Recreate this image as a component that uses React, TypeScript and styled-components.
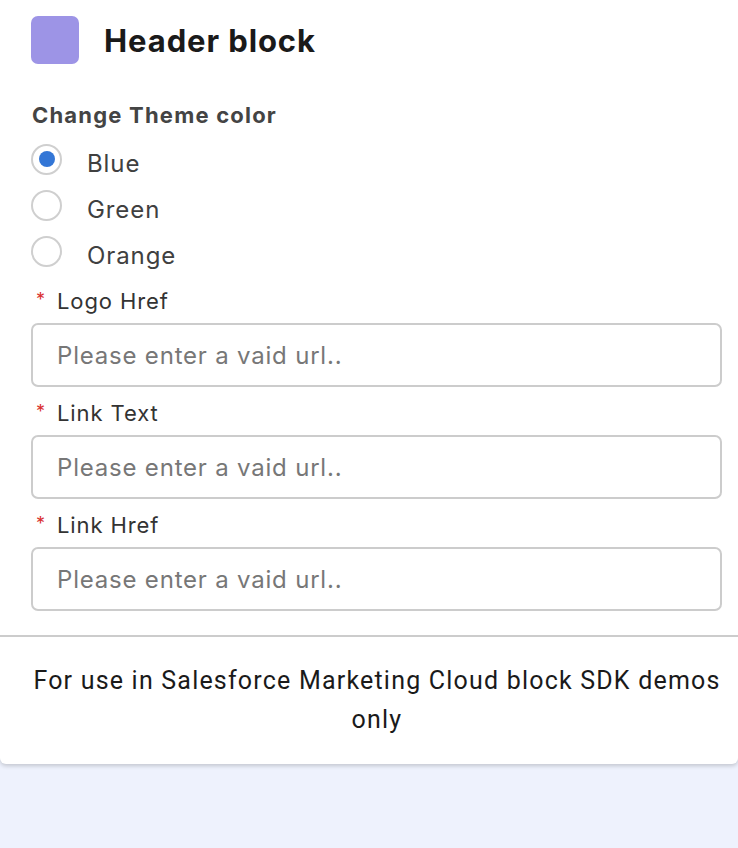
import styled, { createGlobalStyle } from "styled-components";
import { useState } from "react";

const GlobalStyle = createGlobalStyle`
  html, body {
    margin: 0;
    padding: 0;
    background: #eef2fd;
  }
  body {
    font-family: Inter, "Noto Sans", sans-serif;
    min-height: 848px;
  }
`;

const Card = styled.div`
  background: #ffffff;
  border-radius: 0 0 6px 6px;
  box-shadow: 0 2px 4px rgba(0, 0, 0, 0.18);
  width: 738px;
`;

const Body = styled.div`
  padding: 16px 16px 24px 31px;
`;

const TitleRow = styled.div`
  display: flex;
  align-items: center;
  gap: 25px;
  height: 48px;
`;

const Swatch = styled.div`
  width: 48px;
  height: 48px;
  border-radius: 7px;
  background: #9d94e6;
`;

const Title = styled.h1`
  margin: 0;
  font-size: 31px;
  font-weight: 700;
  letter-spacing: 0.9px;
  color: #1a1a1a;
`;

const GroupLabel = styled.div`
  margin-top: 38px;
  font-size: 22px;
  font-weight: 700;
  letter-spacing: 1.2px;
  color: #444444;
  line-height: 26px;
  padding-left: 1px;
`;

const RadioList = styled.div`
  display: flex;
  flex-direction: column;
  gap: 16px;
  margin-top: 16px;
`;

const RadioRow = styled.label`
  display: flex;
  align-items: center;
  gap: 25px;
  height: 30px;
  cursor: pointer;
`;

const RadioCircle = styled.span<{ $checked: boolean }>`
  box-sizing: border-box;
  width: 31px;
  height: 31px;
  border-radius: 50%;
  border: 2px solid #cfcfcf;
  background: #ffffff;
  display: flex;
  align-items: center;
  justify-content: center;

  &::after {
    content: "";
    width: 16px;
    height: 16px;
    border-radius: 50%;
    background: #3376d6;
    display: ${(p) => (p.$checked ? "block" : "none")};
  }
`;

const RadioText = styled.span`
  font-size: 24px;
  letter-spacing: 0.9px;
  color: #404040;
  margin-top: 8px;
`;

const Field = styled.div`
  margin-top: 22px;
  & + & {
    margin-top: 13px;
  }
`;

const FieldLabel = styled.div`
  display: flex;
  align-items: center;
  font-size: 22px;
  letter-spacing: 0.9px;
  color: #333333;
  line-height: 26px;
  padding-left: 5px;
  margin-bottom: 9px;
`;

const Required = styled.span`
  color: #d93030;
  font-size: 18px;
  width: 21px;
  margin-top: -3px;
`;

const Input = styled.input`
  box-sizing: border-box;
  display: block;
  width: 691px;
  height: 64px;
  border: 2px solid #cccccc;
  border-radius: 7px;
  padding: 0 24px;
  font-family: Inter, "Noto Sans", sans-serif;
  font-size: 24px;
  letter-spacing: 0.8px;
  color: #333333;
  outline: none;

  &::placeholder {
    color: #777777;
  }
`;

const Divider = styled.hr`
  margin: 0;
  border: none;
  border-top: 2px solid #cccccc;
`;

const Footer = styled.div`
  padding: 24px 0 25px 16px;
  text-align: center;
  font-family: Roboto, "Liberation Sans", sans-serif;
  font-size: 25px;
  letter-spacing: 1.2px;
  line-height: 39px;
  color: #1a1a1a;
`;

const themes = ["Blue", "Green", "Orange"];
const fields = ["Logo Href", "Link Text", "Link Href"];

export default function App() {
  const [theme, setTheme] = useState("Blue");

  return (
    <>
      <GlobalStyle />
      <Card>
        <Body>
          <TitleRow>
            <Swatch />
            <Title>Header block</Title>
          </TitleRow>
          <GroupLabel>Change Theme color</GroupLabel>
          <RadioList>
            {themes.map((t) => (
              <RadioRow key={t} onClick={() => setTheme(t)}>
                <RadioCircle $checked={theme === t} />
                <RadioText>{t}</RadioText>
              </RadioRow>
            ))}
          </RadioList>
          {fields.map((f) => (
            <Field key={f}>
              <FieldLabel>
                <Required>*</Required>
                {f}
              </FieldLabel>
              <Input placeholder="Please enter a vaid url.." />
            </Field>
          ))}
        </Body>
        <Divider />
        <Footer>For use in Salesforce Marketing Cloud block SDK demos only</Footer>
      </Card>
    </>
  );
}
